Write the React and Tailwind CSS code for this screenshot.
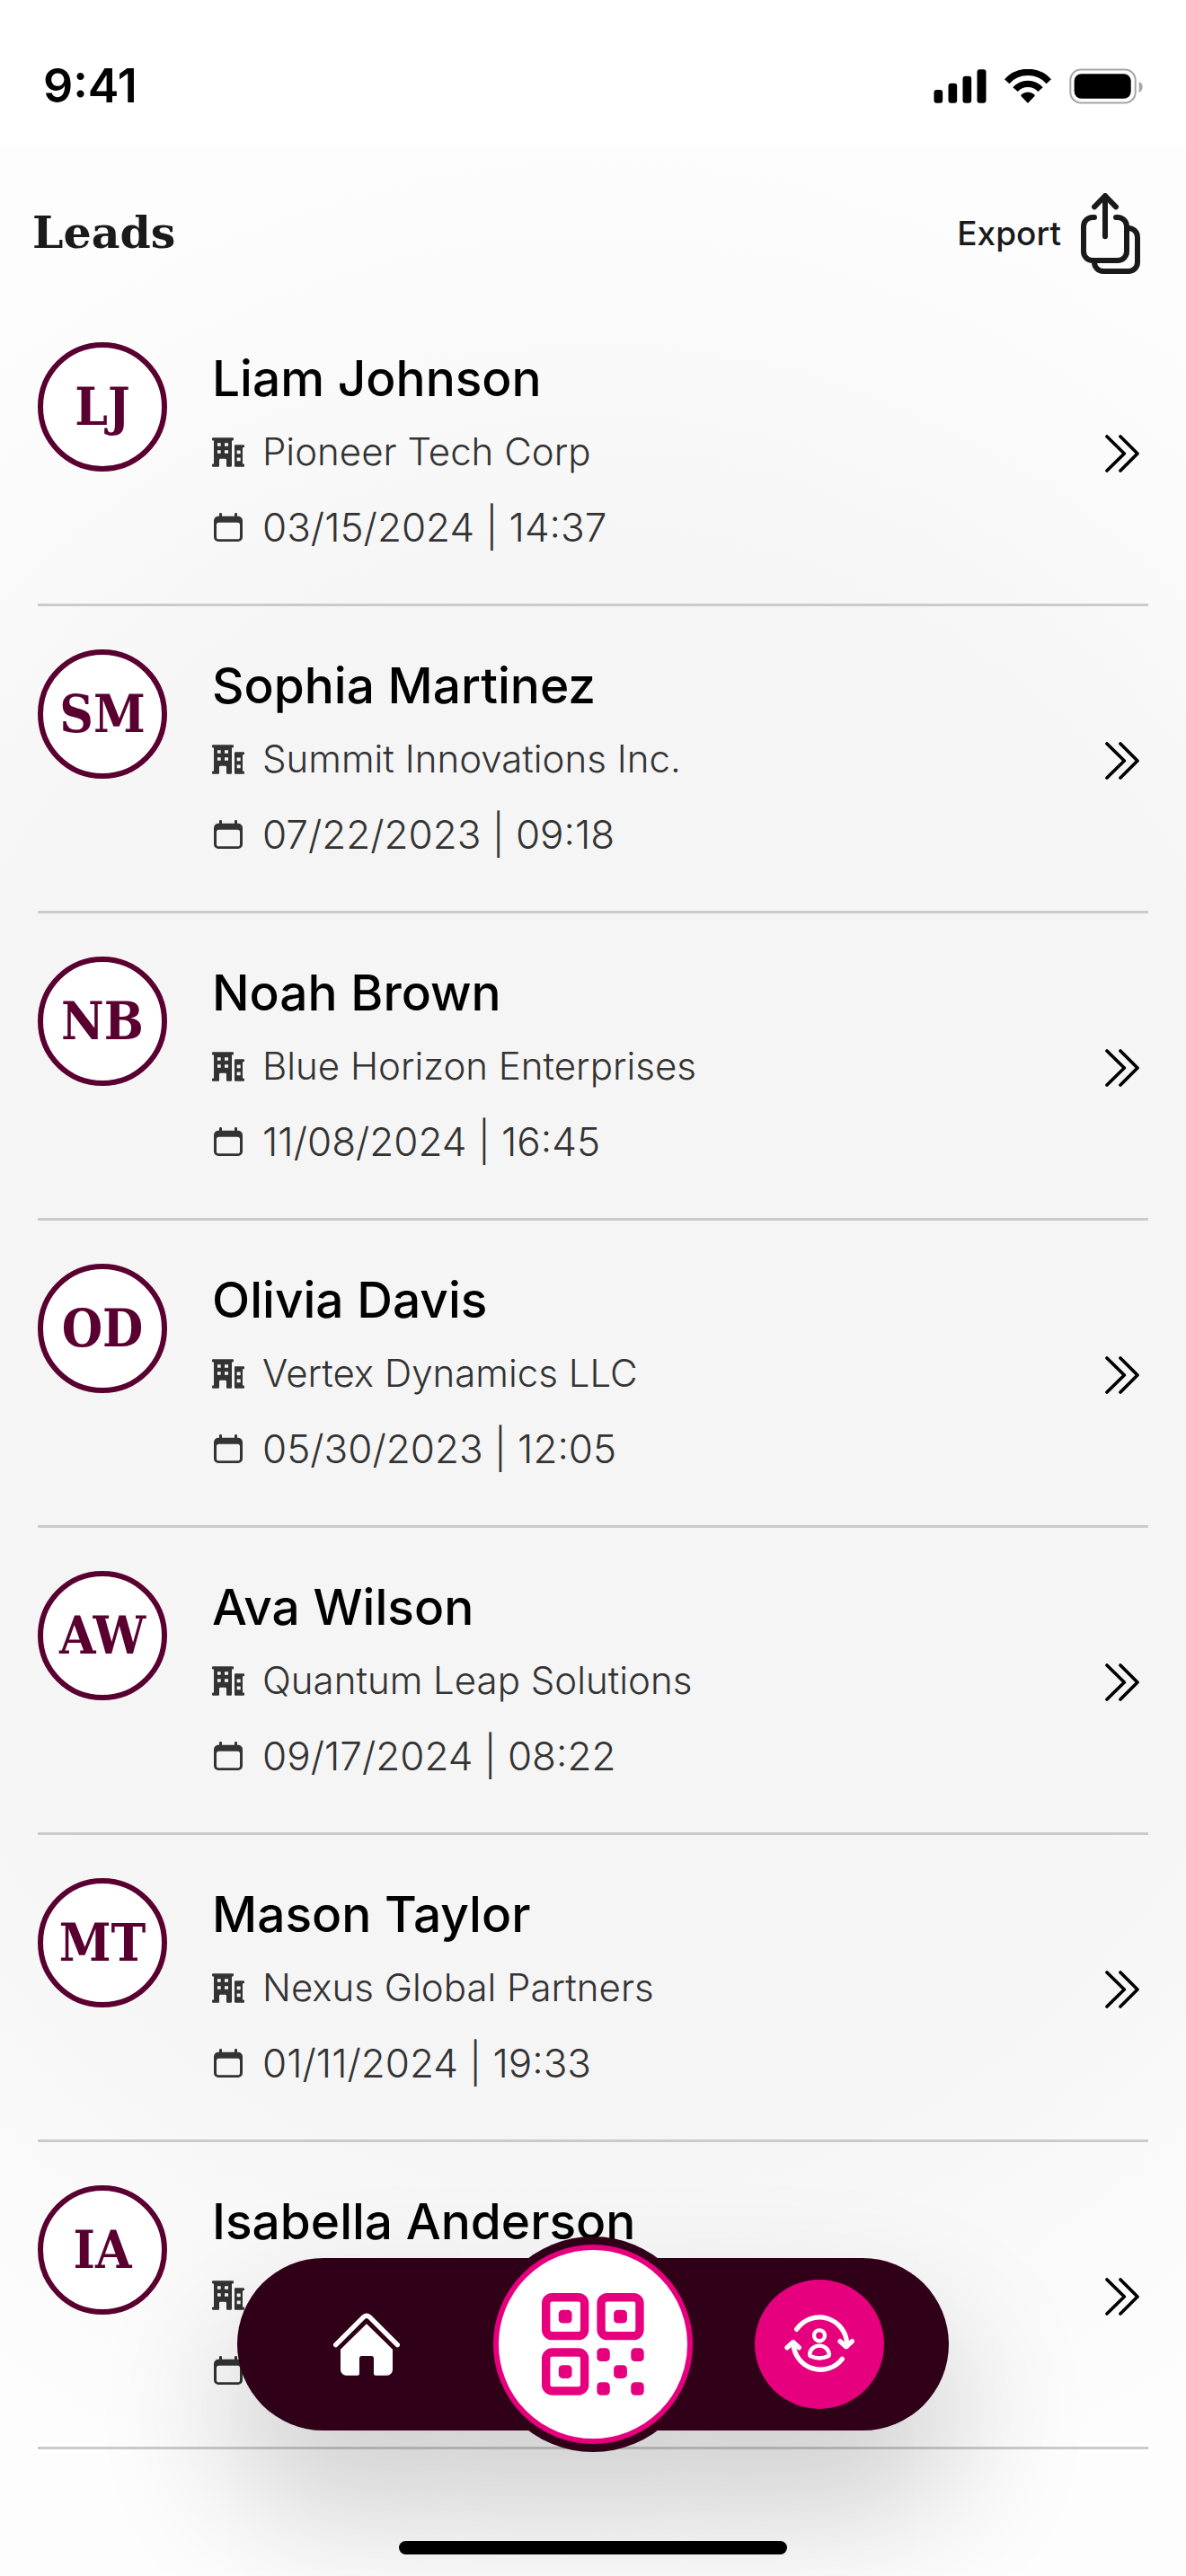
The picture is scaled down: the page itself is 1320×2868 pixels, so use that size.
const leads = [
  { initials: 'LJ', name: 'Liam Johnson', company: 'Pioneer Tech Corp', date: '03/15/2024 | 14:37' },
  { initials: 'SM', name: 'Sophia Martinez', company: 'Summit Innovations Inc.', date: '07/22/2023 | 09:18' },
  { initials: 'NB', name: 'Noah Brown', company: 'Blue Horizon Enterprises', date: '11/08/2024 | 16:45' },
  { initials: 'OD', name: 'Olivia Davis', company: 'Vertex Dynamics LLC', date: '05/30/2023 | 12:05' },
  { initials: 'AW', name: 'Ava Wilson', company: 'Quantum Leap Solutions', date: '09/17/2024 | 08:22' },
  { initials: 'MT', name: 'Mason Taylor', company: 'Nexus Global Partners', date: '01/11/2024 | 19:33' },
  { initials: 'IA', name: 'Isabella Anderson', company: '', date: '' },
];

function SignalIcon() {
  return (
    <svg className="w-[59px] h-[38px]" viewBox="116 111 176 114" aria-hidden="true">
      <rect x="117" y="180" width="29" height="44" rx="9" />
      <rect x="165" y="158" width="29" height="66" rx="9" />
      <rect x="213" y="134" width="29" height="90" rx="9" />
      <rect x="261" y="112" width="30" height="112" rx="9" />
    </svg>
  );
}

function WifiIcon() {
  return (
    <svg className="w-[52px] h-[38px]" viewBox="352 111 156 114" aria-hidden="true">
      <g fill="none" stroke="black" strokeWidth="22">
        <path d="M360 152a95 95 0 0 1 140 0" />
        <path d="M388 179a56 56 0 0 1 84 0" />
      </g>
      <path d="M428 223 408 202q-3-4 1-7a33 33 0 0 1 42 0q4 3 1 7l-20 21q-2 2-4 0z" />
    </svg>
  );
}

function BatteryIcon() {
  return (
    <svg className="w-[82px] h-10" viewBox="570 108 247 119" aria-hidden="true">
      <rect x="574" y="112" width="218" height="111" rx="35" fill="none" stroke="#a6a6a6" strokeWidth="6" />
      <rect x="587" y="126" width="190" height="83" rx="24" />
      <path d="M804 152q12 6 12 18.500t-12 18.500z" fill="#a6a6a6" />
    </svg>
  );
}

function ExportIcon() {
  return (
    <svg
      className="w-[66px] h-[90px]"
      viewBox="609 525 198 270"
      fill="none"
      stroke="currentColor"
      strokeWidth="18"
      strokeLinecap="round"
      strokeLinejoin="round"
      aria-hidden="true"
    >
      <path d="M654 606h-6a30 30 0 0 0-30 30v84a30 30 0 0 0 30 30h84a30 30 0 0 0 30-30v-84a30 30 0 0 0-30-30h-6" />
      <path d="M768 642a30 30 0 0 1 30 30v84a30 30 0 0 1-30 30h-84a30 30 0 0 1-30-30" />
      <path d="M690 670V534M654 571l36-37 36 37" />
    </svg>
  );
}

function BuildingIcon() {
  return (
    <svg className="w-9 h-[33px]" viewBox="48 82 108 98" fill="currentColor" aria-hidden="true">
      <path
        fillRule="evenodd"
        d="M51 82h66q3 0 3 3v4q0 3-3 3h-3v84q0 4-4 4H99q-3 0-3-3v-20q0-4-4-4H76q-4 0-4 4v20q0 3-3 3H51q-3 0-3-3v-4q0-3 3-3h3V92h-3q-3 0-3-3v-4q0-3 3-3zM66 100v11h11v-11zM90 100v11h12v-11zM66 124v11h11v-11zM90 124v11h12v-11z"
      />
      <path
        fillRule="evenodd"
        d="M126 106h27q3 0 3 3v3q0 3-3 3h-3v55h3q3 0 3 3v4q0 3-3 3h-27q-3 0-3-3v-68q0-3 3-3zM131 125v11h12v-11zM131 149v11h12v-11z"
      />
    </svg>
  );
}

function CalendarIcon() {
  return (
    <svg className="w-8 h-8" viewBox="54 335 96 96" fill="currentColor" aria-hidden="true">
      <rect x="72" y="335" width="9" height="20" rx="4" />
      <rect x="123" y="335" width="9" height="20" rx="4" />
      <path
        fillRule="evenodd"
        d="M69 346h66a15 15 0 0 1 15 15v55a15 15 0 0 1-15 15H69a15 15 0 0 1-15-15v-55a15 15 0 0 1 15-15zM71 367a8 8 0 0 0-8 8v40a8 8 0 0 0 8 8h62a8 8 0 0 0 8-8v-40a8 8 0 0 0-8-8z"
      />
    </svg>
  );
}

function ChevronsIcon() {
  return (
    <svg
      className="w-[38px] h-[42px]"
      viewBox="147 137 114 126"
      fill="none"
      stroke="currentColor"
      strokeWidth="11"
      strokeLinecap="round"
      strokeLinejoin="round"
      aria-hidden="true"
    >
      <path d="M153 143l58 57-58 57M198 143l57 57-57 57" />
    </svg>
  );
}

function HomeIcon() {
  return (
    <svg className="w-[74px] h-[70px]" viewBox="453 464 222 210" aria-hidden="true">
      <path
        d="M461 571l93-93q10-9 20 0l93 93"
        fill="none"
        stroke="white"
        strokeWidth="16"
        strokeLinecap="round"
        strokeLinejoin="round"
      />
      <path
        d="M564 501l87 85v68a19 19 0 0 1-19 19h-38a6 6 0 0 1-6-6v-51a8 8 0 0 0-8-8h-32a8 8 0 0 0-8 8v51a6 6 0 0 1-6 6h-38a19 19 0 0 1-19-19v-68z"
        fill="white"
      />
    </svg>
  );
}

function QrIcon() {
  return (
    <svg className="w-[114px] h-[114px]" viewBox="0 0 340 340" fill="#e6007e" aria-hidden="true">
      <g fill="none" stroke="#e6007e" strokeWidth="28">
        <rect x="14" y="14" width="128" height="128" rx="20" />
        <rect x="197" y="14" width="128" height="128" rx="20" />
        <rect x="14" y="197" width="128" height="128" rx="20" />
      </g>
      <rect x="56" y="56" width="44" height="44" rx="13" />
      <rect x="239" y="56" width="44" height="44" rx="13" />
      <rect x="56" y="239" width="44" height="44" rx="13" />
      <rect x="183" y="183" width="43" height="44" rx="13" />
      <rect x="296" y="183" width="43" height="44" rx="13" />
      <rect x="239" y="239" width="44" height="44" rx="13" />
      <rect x="183" y="296" width="43" height="43" rx="13" />
      <rect x="296" y="296" width="43" height="43" rx="13" />
    </svg>
  );
}

function LeadsIcon() {
  return (
    <svg
      className="w-[78px] h-[68px]"
      viewBox="639 468 234 204"
      fill="none"
      stroke="white"
      strokeLinecap="round"
      strokeLinejoin="round"
      aria-hidden="true"
    >
      <g strokeWidth="16">
        <path d="M680 520a92 92 0 0 1 168 50v6" />
        <path d="M825 560l20 18 20-18" />
        <path d="M832 619a91 91 0 0 1-163-49v-6" />
        <path d="M648 581l20-18 20 18" />
      </g>
      <g strokeWidth="13">
        <circle cx="756" cy="541" r="18" />
        <path d="M723 604c2-18 16-29 33-29s31 11 33 29q0 4-4 6-29 13-58 0-4-2-4-6z" />
      </g>
    </svg>
  );
}

function LeadRow({ lead }) {
  return (
    <li className="flex gap-[50px] pt-12 pb-[43px] border-b-3 border-[#cbcbcb]">
      <div className="size-36 shrink-0 rounded-full border-6 border-[#5a0030] bg-white flex items-center justify-center font-['DejaVu_Serif_Condensed','DejaVu_Serif',serif] text-[58px] font-bold text-[#5a0030]">
        {lead.initials}
      </div>
      <div className="flex-1 min-w-0">
        <h2 className="text-[55px] leading-[80px] font-medium text-black">{lead.name}</h2>
        <p className="h-[84px] flex items-center gap-5 text-[42px] leading-[84px] font-light text-[#333333]">
          <BuildingIcon />
          {lead.company}
        </p>
        <p className="h-[84px] flex items-center gap-5 text-[44px] leading-[84px] font-light text-[#333333]">
          <span className="w-9 flex justify-center">
            <CalendarIcon />
          </span>
          {lead.date}
        </p>
      </div>
      <button className="self-center mr-[10px]" aria-label={`Open ${lead.name}`}>
        <ChevronsIcon />
      </button>
    </li>
  );
}

function BottomNav() {
  return (
    <div className="fixed inset-x-0 bottom-6 flex flex-col items-center gap-[123px]">
      <nav className="w-3/5 h-48 px-18 rounded-full bg-[#2f0018] flex items-center justify-between shadow-[0_80px_150px_16px_rgba(0,0,0,0.17)]">
        <button className="size-36 flex items-center justify-center" aria-label="Home">
          <HomeIcon />
        </button>
        <button
          className="-my-6 size-60 rounded-full bg-[#2f0018] flex items-center justify-center"
          aria-label="Scan code"
        >
          <span className="size-[222px] rounded-full border-6 border-[#e6007e] bg-white flex items-center justify-center">
            <QrIcon />
          </span>
        </button>
        <button
          className="size-36 rounded-full bg-[#e6007e] flex items-center justify-center"
          aria-label="Leads"
        >
          <LeadsIcon />
        </button>
      </nav>
      <div className="w-[432px] h-[15px] rounded-full bg-black" />
    </div>
  );
}

function App() {
  return (
    <div className="min-h-screen flex flex-col bg-white font-['Inter',sans-serif]">
      <div className="h-41 pt-7 px-12 flex items-center justify-between">
        <span className="text-[52px] font-semibold text-black">9:41</span>
        <div className="flex items-center gap-5">
          <SignalIcon />
          <WifiIcon />
          <BatteryIcon />
        </div>
      </div>

      <main className="flex-1 pb-[141px] bg-[radial-gradient(ellipse_90%_50%_at_center,#f5f5f5_62%,#fdfdfd_100%)]">
        <header className="pt-[51px] pb-7 pl-9 pr-[51px] flex items-center justify-between text-[#1a1a1a]">
          <h1 className="font-['DejaVu_Serif',serif] text-[49px] font-bold">Leads</h1>
          <button className="flex items-center gap-[22px] text-[37px] font-medium">
            Export
            <ExportIcon />
          </button>
        </header>
        <ul className="px-[42px]">
          {leads.map((lead) => (
            <LeadRow key={lead.name} lead={lead} />
          ))}
        </ul>
      </main>

      <BottomNav />
    </div>
  );
}

export default App;
